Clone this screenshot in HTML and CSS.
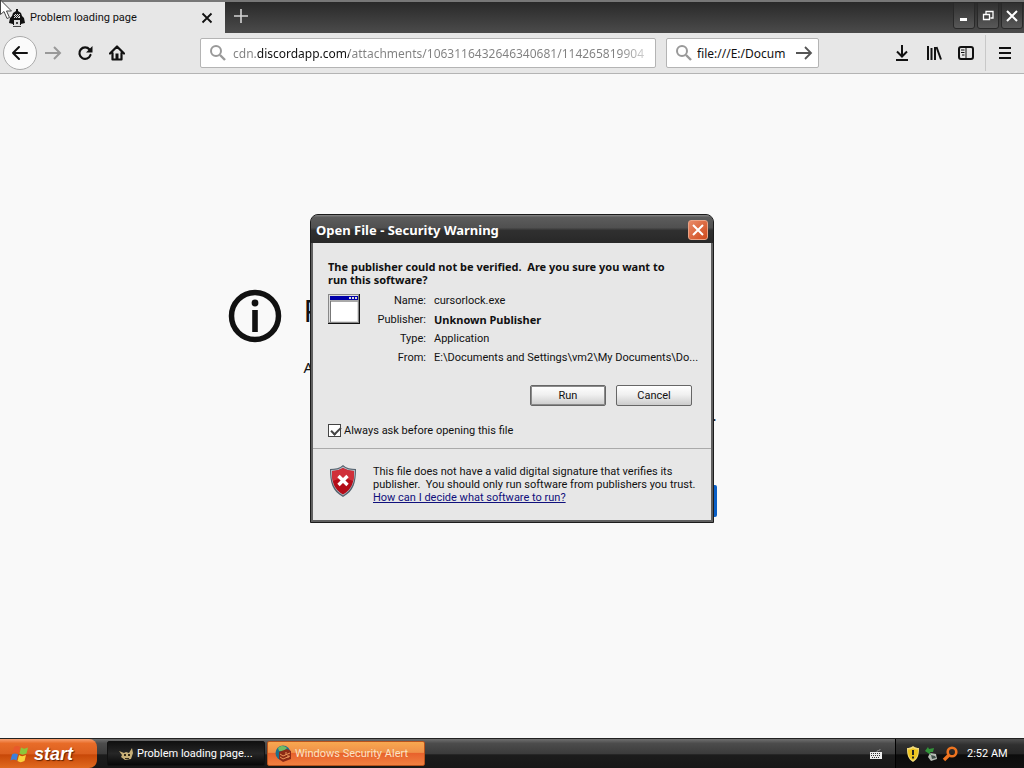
FILE: index.html
```html
<!DOCTYPE html>
<html lang="en">
<head>
<meta charset="utf-8">
<meta name="viewport" content="width=device-width, initial-scale=1">
<title>Problem loading page</title>
<link rel="stylesheet" href="styles.css">
</head>
<body>
<header class="browser">
  <div class="tabstrip">
    <div class="tab">
      <svg class="favicon" width="16" height="20" viewBox="0 0 16 20" aria-hidden="true"><path d="M7 1h2v2l3 2 1 3 2 2 1 5-4 1v1H4v-1l-4-1 1-5 2-2 1-3 3-2z" fill="#111"/><path d="M5 6h6v4H5z" fill="#ddd"/><path d="M5 6h1v1H5zM7 6h1v1H7zM9 6h1v1H9zM6 7h1v1H6zM8 7h1v1H8zM10 7h1v1h-1zM5 8h1v1H5zM7 8h1v1H7zM9 8h1v1H9zM6 9h1v1H6zM8 9h1v1H8z" fill="#222"/><path d="M5 12h6v6H5z" fill="#ddd"/><path d="M4 18h8v1H4zM7 14h2v2H7z" fill="#444"/></svg>
      <span class="tab-title">Problem loading page</span>
      <button class="plain tab-close" aria-label="Close tab"><svg width="12" height="12" viewBox="0 0 12 12"><path d="M1.500 1.500l9 9m0-9l-9 9" stroke="#111" stroke-width="1.800"/></svg></button>
    </div>
    <button class="plain new-tab" aria-label="New tab"><svg width="16" height="16" viewBox="0 0 16 16"><path d="M8 1v14M1 8h14" stroke="#d4d4d4" stroke-width="1.600"/></svg></button>
    <div class="window-controls">
      <button class="wbtn" aria-label="Minimize"><svg width="12" height="12" viewBox="0 0 12 12"><path d="M2 8h7v3H2z" fill="#fff"/></svg></button>
      <button class="wbtn" aria-label="Restore"><svg width="12" height="12" viewBox="0 0 12 12"><path d="M4 4V1.500h7V8H8.500M1.500 4.500h6v5h-6z" fill="none" stroke="#fff" stroke-width="1.300"/></svg></button>
      <button class="wbtn" aria-label="Close"><svg width="12" height="12" viewBox="0 0 12 12"><path d="M1 1l10 10M11 1L1 11" stroke="#fff" stroke-width="2"/></svg></button>
    </div>
  </div>
  <nav class="toolbar">
    <button class="plain back" aria-label="Back"><svg width="18" height="16" viewBox="0 0 18 16"><path d="M16 8H2M8 2L2 8l6 6" fill="none" stroke="#111" stroke-width="2" stroke-linecap="round" stroke-linejoin="round"/></svg></button>
    <button class="plain tool" aria-label="Forward"><svg width="18" height="16" viewBox="0 0 18 16"><path d="M1 8h15M10 2l6 6-6 6" fill="none" stroke="#999" stroke-width="2"/></svg></button>
    <button class="plain tool" aria-label="Reload"><svg width="16" height="16" viewBox="0 0 16 16"><path d="M12.500 4.500A5.700 5.700 0 1 0 13.500 10" fill="none" stroke="#111" stroke-width="2.200" stroke-linecap="round"/><path d="M15.500 1v6.500H9z" fill="#111"/></svg></button>
    <button class="plain tool" aria-label="Home"><svg width="16" height="16" viewBox="0 0 16 16"><path d="M1 8.500L8 1.500l7 7M3.500 8v6.500h9V8" fill="none" stroke="#111" stroke-width="2.200" stroke-linejoin="round" stroke-linecap="round"/><path d="M6.500 8.500h3V14h-3z" fill="#111"/></svg></button>
    <div class="field url-field">
      <svg width="18" height="18" viewBox="0 0 18 18" aria-hidden="true"><circle cx="7" cy="7" r="5" fill="none" stroke="#999" stroke-width="2"/><path d="M11 11l5 5" stroke="#999" stroke-width="2.400"/></svg>
      <input class="url" type="text" aria-label="Address" value="cdn.discordapp.com/attachments/1063116432646340681/114265819904">
    </div>
    <div class="field search-field">
      <svg width="18" height="18" viewBox="0 0 18 18" aria-hidden="true"><circle cx="7" cy="7" r="5" fill="none" stroke="#999" stroke-width="2"/><path d="M11 11l5 5" stroke="#999" stroke-width="2.400"/></svg>
      <input class="search" type="text" aria-label="Search" value="file:///E:/Docum">
      <button class="plain" aria-label="Go"><svg width="18" height="14" viewBox="0 0 18 14"><path d="M1 7h15M10 1l6 6-6 6" fill="none" stroke="#555" stroke-width="1.800"/></svg></button>
    </div>
    <div class="toolbar-end">
      <button class="plain tool" aria-label="Downloads"><svg width="16" height="18" viewBox="0 0 16 18"><path d="M8 1v11M3 7.500l5 5 5-5M2 16h12" fill="none" stroke="#111" stroke-width="2"/></svg></button>
      <button class="plain tool" aria-label="Library"><svg width="16" height="16" viewBox="0 0 16 16"><path d="M2 1v14M5.500 3v12M9 2v13M10.500 2l4.500 12.500" fill="none" stroke="#111" stroke-width="2"/></svg></button>
      <button class="plain tool" aria-label="Sidebars"><svg width="16" height="14" viewBox="0 0 16 14"><rect x="1" y="1" width="14" height="12" rx="2" fill="none" stroke="#111" stroke-width="2"/><path d="M8 1v12M3 4h3.500M3 6.500h3.500M4 9h2.500" stroke="#111"/></svg></button>
      <button class="plain tool menu" aria-label="Menu"><svg width="14" height="14" viewBox="0 0 14 14"><path d="M1 2h12M1 7h12M1 12h12" stroke="#111" stroke-width="2"/></svg></button>
    </div>
  </nav>
</header>

<main class="error-page">
  <svg class="info" width="54" height="54" viewBox="0 0 54 54" aria-hidden="true"><circle cx="27" cy="27" r="23.500" fill="none" stroke="#111" stroke-width="5.500"/><circle cx="27" cy="14" r="3.400" fill="#111"/><path d="M24.200 21h5.600v22h-5.600z" fill="#111"/></svg>
  <div class="error-text">
    <h1>P</h1>
    <p>A</p>
    <p class="tail">.</p>
    <button class="retry" aria-label="Try Again"></button>
  </div>
</main>

<div class="overlay">
  <section class="dialog" role="dialog" aria-labelledby="dialog-title">
    <div class="titlebar">
      <h2 id="dialog-title">Open File - Security Warning</h2>
      <button class="dialog-close" aria-label="Close dialog"><svg width="12" height="12" viewBox="0 0 12 12"><path d="M1 1l10 10M11 1L1 11" stroke="#fff" stroke-width="2"/></svg></button>
    </div>
    <div class="dialog-main">
      <p class="question">The publisher could not be verified.&nbsp; Are you sure you want to run this software?</p>
      <div class="details">
        <svg width="32" height="30" viewBox="0 0 32 30" aria-hidden="true"><path d="M0 0h32v30H0z" fill="#111"/><path d="M0 0h31v29H0z" fill="#888"/><path d="M1 1h29v27H1z" fill="#ddd"/><path d="M2 2h28v4H2z" fill="#00a"/><path d="M3 8h26v19H3z" fill="#fff"/><path d="M2 7h28M2.500 7v21" stroke="#777"/><path d="M21 3h2v2h-2zM24 3h2v2h-2zM27 3h2v2h-2z" fill="#ddd"/></svg>
        <dl class="facts">
          <dt>Name:</dt><dd>cursorlock.exe</dd>
          <dt>Publisher:</dt><dd class="strong">Unknown Publisher</dd>
          <dt>Type:</dt><dd>Application</dd>
          <dt>From:</dt><dd>E:\Documents and Settings\vm2\My Documents\Do...</dd>
        </dl>
      </div>
      <div class="actions">
        <button class="btn default">Run</button>
        <button class="btn">Cancel</button>
      </div>
      <label class="always"><input type="checkbox" checked>Always ask before opening this file</label>
    </div>
    <div class="dialog-note">
      <svg width="28" height="32" viewBox="0 0 28 32" aria-hidden="true"><path d="M14 0c3 3 8 4 13 4 0 13-2 22-13 28C3 26 1 17 1 4c5 0 10-1 13-4z" fill="#53616d"/><path d="M14 1.500c3 2.500 7 3.500 12 3.500 0 12-3 20-12 25.500C5 25 2 17 2 5c5 0 9-1 12-3.500z" fill="#b4bcc4"/><path d="M14 3c3 2 7 3 11 3 0 12-2 18-11 23.500C5 24 3 18 3 6c4 0 8-1 11-3z" fill="#b40c18"/><path d="M14 3c3 2 7 3 11 3 0 4 0 7-1 10-6-3-14-3-20 0-1-3-1-6-1-10 4 0 8-1 11-3z" fill="#d0303a"/><path d="M9.500 11l9 9m0-9l-9 9" stroke="#fff" stroke-width="3.400"/></svg>
      <p>This file does not have a valid digital signature that verifies its publisher.&nbsp; You should only run software from publishers you trust.<br><a href="#">How can I decide what software to run?</a></p>
    </div>
  </section>
</div>

<footer class="taskbar">
  <button class="start">
    <svg width="20" height="18" viewBox="0 0 20 18" aria-hidden="true"><path d="M4 2c2-1.500 4-1.500 6 0L8.500 8c-2-1.500-4-1.500-6 0z" fill="#e8592b"/><path d="M11 2.500c2 1.500 4 1.500 7 0L16.500 8.500c-3 1.500-5 1.500-7 0z" fill="#8cc63a"/><path d="M2 9.500c2-1.500 4-1.500 6 0L6.500 15.500c-2-1.500-4-1.500-6 0z" fill="#3c7fdc"/><path d="M9 10c2 1.500 4 1.500 7 0L14.500 16c-3 1.500-5 1.500-7 0z" fill="#fad23c"/></svg>
    <span>start</span>
  </button>
  <button class="task active">
    <svg width="16" height="16" viewBox="0 0 16 16" aria-hidden="true"><path d="M1 5l5 2 2-1 3 1 3-5 1 5-2 6-6 1-4-3H3l1-2z" fill="#c8b078"/><path d="M6 8h2v2H6zM10 8h2v2h-2zM7 12h4v1H7z" fill="#332a18"/></svg>
    <span>Problem loading page...</span>
  </button>
  <button class="task alert">
    <svg width="17" height="17" viewBox="0 0 17 17" aria-hidden="true"><circle cx="8" cy="8" r="7.500" fill="#1f6f8a"/><path d="M3 3c3-3 7-2 9 0l-3 3H4z" fill="#72bb62"/><path d="M4 7l8-3 4 2v8l-8 3-4-3z" fill="#8d2b16"/><path d="M5 9l3 2 7-3M5 12l3 2 7-3M11 7v3M13 10v3" stroke="#e9965a" fill="none"/></svg>
    <span>Windows Security Alert</span>
  </button>
  <svg class="keyboard" width="14" height="12" viewBox="0 0 14 12" aria-hidden="true"><path d="M8 4c0-3 3 0 3-3" stroke="#999" fill="none"/><path d="M1 4h12v7H1z" fill="#eee"/><path d="M2 5.500h10M2 7.500h10M3 9.500h8" stroke="#333" stroke-dasharray="1 1"/></svg>
  <div class="tray">
    <svg width="14" height="16" viewBox="0 0 14 16" aria-hidden="true"><path d="M7 0c2 1.500 4 2 6 2 0 7-1 11-6 14C2 13 1 9 1 2c2 0 4-.5 6-2z" fill="#f3dc7a"/><path d="M7 2c1.500 1 3 1.500 5 1.500C12 9 11 12 7 14.500 3 12 2 9 2 3.500 4 3.500 5.500 3 7 2z" fill="#efc51e"/><path d="M6 4h2v5H6zM6 10.500h2v2H6z" fill="#222"/></svg>
    <svg width="14" height="16" viewBox="0 0 14 16" aria-hidden="true"><path d="M6 7l6 1 1 5-6 2-3-4z" fill="#b8beb7"/><path d="M7 9l4 1 1 2-4 1z" fill="#40504a"/><path d="M1 5l3-4 1 2 5-1-1 4H6l1 3z" fill="#32943a"/></svg>
    <svg width="16" height="16" viewBox="0 0 16 16" aria-hidden="true"><circle cx="10" cy="6" r="4.300" fill="none" stroke="#ee7420" stroke-width="2.600"/><path d="M6.500 9.500L2 14" stroke="#ee7420" stroke-width="3.400"/></svg>
    <time>2:52 AM</time>
  </div>
</footer>

<svg class="cursor" width="13" height="20" viewBox="0 0 13 20" aria-hidden="true"><path d="M.5 0v14.500l3.500-3 3 7 2.500-1-3-6.500h5z" fill="#fff" stroke="#444"/></svg>
</body>
</html>
```
FILE: styles.css
```css
* { box-sizing: border-box; }
body {
  margin: 0;
  min-height: 100vh;
  display: flex;
  flex-direction: column;
  position: relative;
  background: #f9f9f9;
  color: #111;
  font: 11px/13px Roboto, "Open Sans", sans-serif;
}
h1, h2, p, dl, dd { margin: 0; }
svg { display: block; flex: none; }
button, input { font: inherit; color: inherit; }
.plain {
  display: grid;
  place-items: center;
  padding: 0;
  border: 0;
  background: none;
}

/* Tab strip */
.tabstrip {
  display: flex;
  height: 33px;
  border-top: 2px solid #777;
  background: linear-gradient(#292929, #4b4b4b);
}
.tab {
  display: flex;
  align-items: center;
  width: 225px;
  padding: 0 12px 0 9px;
  background: #e7e7e7;
}
.tab-title { margin-left: 5px; }
.tab-close { margin-left: auto; }
.new-tab { width: 32px; height: 28px; }
.window-controls { display: flex; gap: 2px; margin-left: auto; padding-right: 1px; }
.wbtn {
  display: grid;
  place-items: center;
  width: 22px;
  height: 27px;
  padding: 0;
  border: 1px solid #292929;
  border-radius: 0 0 3px 3px;
  background: linear-gradient(#303030, #585858);
}

/* Navigation bar */
.toolbar {
  display: flex;
  align-items: center;
  height: 41px;
  padding-left: 3px;
  background: #e7e7e7;
  border-bottom: 1px solid #b4b4b4;
}
.back {
  width: 34px;
  height: 34px;
  border: 1px solid #aaa;
  border-radius: 50%;
  background: #fbfbfb;
}
.tool { width: 32px; height: 32px; }
.field {
  display: flex;
  align-items: center;
  height: 30px;
  border: 1px solid #b4b4b4;
  border-radius: 2px;
  background: #fff;
  font: 12px/16px "Noto Sans", sans-serif;
}
.field input {
  flex: 1;
  min-width: 0;
  height: 28px;
  padding: 0;
  border: 0;
  outline: 0;
  background: none;
}
.url-field { flex: 1; margin-left: 67px; padding: 0 6px 0 8px; gap: 6px; }
.field .url {
  color: transparent;
  background: linear-gradient(90deg, #808080 24px, #111 24px 116px, #808080 116px calc(100% - 30px), #ddd);
  -webkit-background-clip: text;
  background-clip: text;
}
.search-field { width: 153px; margin-left: 10px; padding: 0 5px 0 8px; gap: 4px; }
.toolbar-end { display: flex; align-items: center; margin-left: 67px; }
.toolbar-end .menu { width: 39px; height: 36px; margin-left: 3px; border-left: 1px solid #c8c8c8; }

/* Error page behind the dialog */
.error-page {
  flex: 1;
  display: flex;
  justify-content: center;
  gap: 22px;
  padding: 215px 80px 0 0;
}
.error-text { display: flex; flex-direction: column; width: 413px; font: 15px/20px "Noto Sans", sans-serif; }
.error-text h1 { padding-top: 4px; font-size: 30px; line-height: 36px; font-weight: 400; }
.error-text p { margin-top: 28px; }
.error-text .tail { align-self: flex-end; }
.retry {
  align-self: flex-end;
  width: 150px;
  height: 32px;
  margin-top: 60px;
  border: 0;
  border-radius: 2px;
  background: #0a60c8;
}

/* Security dialog */
.overlay {
  position: absolute;
  inset: 0 0 31px;
  display: grid;
  place-items: center;
}
.dialog {
  width: 404px;
  border: 1px solid #1c1c1c;
  border-radius: 8px 8px 0 0;
  background: #606060;
  padding: 0 2px 2px;
}
.titlebar {
  display: flex;
  align-items: center;
  justify-content: space-between;
  height: 28px;
  margin: 0 -2px;
  padding: 2px 5px 0;
  border-radius: 7px 7px 0 0;
  background: linear-gradient(#888, #5c5c5c 8%, #505050 45%, #303030 55%, #282828);
}
.titlebar h2 { color: #fff; font: bold 13px/18px "Noto Sans", sans-serif; }
.dialog-close {
  display: grid;
  place-items: center;
  width: 20px;
  height: 20px;
  padding: 0;
  border: 1px solid #eba386;
  border-radius: 3px;
  background: linear-gradient(135deg, #e88a68, #d04a1c);
}
.dialog-main { padding: 17px 16px 11px 15px; background: #e7e7e7; }
.question { padding-right: 16px; font-family: "Noto Sans", sans-serif; font-weight: 700; }
.details { display: flex; gap: 16px; margin-top: 8px; }
.facts {
  flex: 1;
  display: grid;
  grid-template-columns: 50px 1fr;
  column-gap: 8px;
  grid-auto-rows: 19px;
  white-space: nowrap;
}
.facts dt { text-align: right; }
.strong { font-family: "Noto Sans", sans-serif; font-weight: 700; }
.actions { display: flex; justify-content: flex-end; gap: 10px; margin-top: 15px; padding-right: 3px; }
.btn {
  width: 76px;
  height: 21px;
  padding: 0;
  border: 1px solid #666;
  border-radius: 2px;
  background: linear-gradient(#fff, #f0f0f0 45%, #ccc);
}
.btn.default { box-shadow: inset 0 0 0 1px #8a8a8a; }
.always { display: flex; align-items: center; gap: 3px; margin-top: 18px; }
.always input {
  appearance: none;
  width: 13px;
  height: 13px;
  margin: 0;
  border: 1px solid #444;
  background: #fff;
}
.always input:checked::before {
  content: "";
  display: block;
  width: 4px;
  height: 8px;
  margin: 0 0 0 4px;
  border: solid #444;
  border-width: 0 2px 2px 0;
  transform: rotate(45deg);
}
.dialog-note {
  display: flex;
  gap: 16px;
  padding: 16px 8px 16px 16px;
  border-top: 1px solid #aaa;
  background: #e7e7e7;
}
.dialog-note a { color: #10107c; }

/* Taskbar */
.taskbar {
  display: flex;
  align-items: center;
  height: 30px;
  border-top: 1px solid #222;
  background: linear-gradient(#707070, #4c4c4c 15%, #3c3c3c 50%, #1c1c1c 55%, #181818);
  color: #fff;
}
.start {
  display: flex;
  align-items: center;
  gap: 4px;
  width: 97px;
  height: 29px;
  padding: 0 0 0 10px;
  border: 0;
  border-radius: 0 8px 8px 0;
  background: linear-gradient(#f8a070, #e86c28 15%, #dc6020 50%, #c84808 55%, #e06a20);
  color: #fff;
  font: italic bold 18px/20px "Liberation Sans", sans-serif;
  text-shadow: 1px 1px 1px #602000;
}
.task {
  display: flex;
  align-items: center;
  gap: 3px;
  width: 158px;
  height: 25px;
  padding: 0 8px 0 10px;
  border: 1px solid #111;
  border-radius: 2px;
  color: #fff;
  white-space: nowrap;
}
.active { margin-left: 10px; background: linear-gradient(#111, #262626 50%, #080808); }
.alert {
  margin-left: 2px;
  padding-left: 7px;
  border-color: #b8521c;
  background: linear-gradient(#f8a850, #f09048 45%, #e8622c 50%, #f08040);
  color: #fbe2c4;
}
.keyboard { margin-left: auto; }
.tray {
  display: flex;
  align-items: center;
  gap: 4px;
  width: 129px;
  height: 29px;
  margin-left: 12px;
  padding-left: 10px;
  border-left: 1px solid #000;
  background: linear-gradient(#505050, #303030 20%, #262626 50%, #0c0c0c 55%, #111);
}
.tray time { margin-left: 5px; }

.cursor { position: absolute; left: 0; top: 0; }
```
